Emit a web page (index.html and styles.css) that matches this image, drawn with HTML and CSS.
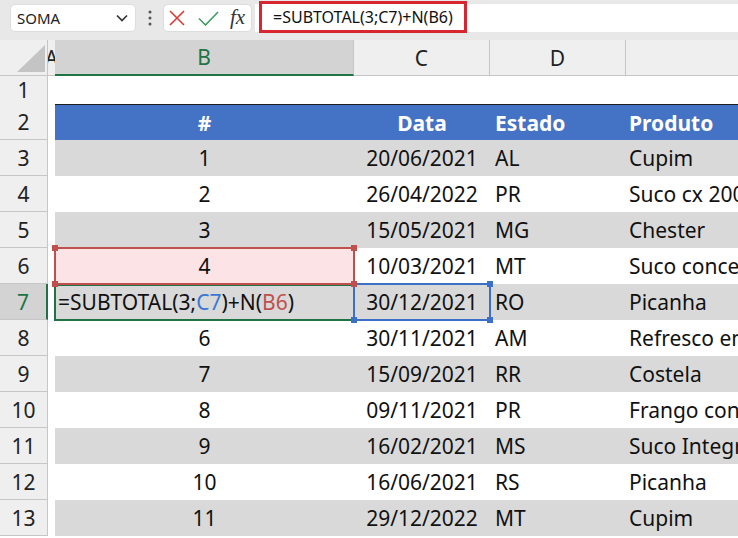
FILE: index.html
```html
<!DOCTYPE html>
<html lang="pt">
<head>
<meta charset="utf-8">
<title>SUBTOTAL</title>
<link rel="stylesheet" href="styles.css">
</head>
<body>
<div class="topbar">
  <div class="namebox">
    <span>SOMA</span>
    <svg class="chev" width="12" height="8" viewBox="0 0 12 8"><polyline points="1,1.5 6,6.5 11,1.5" fill="none" stroke="#333" stroke-width="1.7"/></svg>
  </div>
  <div class="sep">
    <svg width="4" height="16" viewBox="0 0 4 16"><circle cx="2" cy="2" r="1.5" fill="#555"/><circle cx="2" cy="8" r="1.5" fill="#555"/><circle cx="2" cy="14" r="1.5" fill="#555"/></svg>
  </div>
  <div class="fxbox">
    <svg class="ico-x" width="16" height="16" viewBox="0 0 16 16"><path d="M1 1 L15 15 M15 1 L1 15" stroke="#d83a34" stroke-width="1.6" fill="none"/></svg>
    <svg class="ico-ok" width="21" height="15" viewBox="0 0 21 15"><polyline points="1,7.5 7.5,14 20,1" fill="none" stroke="#3f9a62" stroke-width="1.6"/></svg>
    <span class="fx">fx</span>
  </div>
  <div class="formula">
    <span class="formula-text">=SUBTOTAL(3;C7)+N(B6)</span>
  </div>
</div>

<div class="sheet">
  <div class="row colhdr">
    <div class="corner"><svg width="28" height="27" viewBox="0 0 28 27"><polygon points="28,0 28,27 0,27" fill="#c4c4c4"/></svg></div>
    <div class="ch cha">A</div>
    <div class="ch chb">B</div>
    <div class="ch chc">C</div>
    <div class="ch chd">D</div>
    <div class="ch che"></div>
  </div>

  <div class="row short">
    <div class="rh">1</div><div class="c a"></div><div class="c"></div><div class="c"></div><div class="c"></div><div class="c"></div>
  </div>

  <div class="row thead">
    <div class="rh">2</div><div class="c a"></div>
    <div class="c b">#</div><div class="c cc">Data</div><div class="c d">Estado</div><div class="c e">Produto</div>
  </div>

  <div class="row band">
    <div class="rh">3</div><div class="c a"></div>
    <div class="c b">1</div><div class="c cc">20/06/2021</div><div class="c d">AL</div><div class="c e">Cupim</div>
  </div>
  <div class="row">
    <div class="rh">4</div><div class="c a"></div>
    <div class="c b">2</div><div class="c cc">26/04/2022</div><div class="c d">PR</div><div class="c e">Suco cx 200ml</div>
  </div>
  <div class="row band">
    <div class="rh">5</div><div class="c a"></div>
    <div class="c b">3</div><div class="c cc">15/05/2021</div><div class="c d">MG</div><div class="c e">Chester</div>
  </div>
  <div class="row">
    <div class="rh">6</div><div class="c a"></div>
    <div class="c b ref-b6">4<span class="sel sel-red"><i class="h tl"></i><i class="h tr"></i><i class="h bl"></i><i class="h br"></i></span></div>
    <div class="c cc">10/03/2021</div><div class="c d">MT</div><div class="c e">Suco concentrado</div>
  </div>
  <div class="row band">
    <div class="rh rh-active">7</div><div class="c a"></div>
    <div class="c b edit">=SUBTOTAL(3;<span class="ref-blue">C7</span>)+N(<span class="ref-red">B6</span>)<span class="sel sel-green"></span></div>
    <div class="c cc ref-c7">30/12/2021<span class="sel sel-blue"><i class="h tl"></i><i class="h tr"></i><i class="h bl"></i><i class="h br"></i></span></div>
    <div class="c d">RO</div><div class="c e">Picanha</div>
  </div>
  <div class="row">
    <div class="rh">8</div><div class="c a"></div>
    <div class="c b">6</div><div class="c cc">30/11/2021</div><div class="c d">AM</div><div class="c e">Refresco em pó</div>
  </div>
  <div class="row band">
    <div class="rh">9</div><div class="c a"></div>
    <div class="c b">7</div><div class="c cc">15/09/2021</div><div class="c d">RR</div><div class="c e">Costela</div>
  </div>
  <div class="row">
    <div class="rh">10</div><div class="c a"></div>
    <div class="c b">8</div><div class="c cc">09/11/2021</div><div class="c d">PR</div><div class="c e">Frango congelado</div>
  </div>
  <div class="row band">
    <div class="rh">11</div><div class="c a"></div>
    <div class="c b">9</div><div class="c cc">16/02/2021</div><div class="c d">MS</div><div class="c e">Suco Integral</div>
  </div>
  <div class="row">
    <div class="rh">12</div><div class="c a"></div>
    <div class="c b">10</div><div class="c cc">16/06/2021</div><div class="c d">RS</div><div class="c e">Picanha</div>
  </div>
  <div class="row band">
    <div class="rh">13</div><div class="c a"></div>
    <div class="c b">11</div><div class="c cc">29/12/2022</div><div class="c d">MT</div><div class="c e">Cupim</div>
  </div>
</div>
</body>
</html>
```

FILE: styles.css
```css
html, body {
  margin: 0;
  padding: 0;
}
body {
  width: 738px;
  height: 538px;
  overflow: hidden;
  background: #ffffff;
  font-family: "Noto Sans", "Open Sans", sans-serif;
  color: #111;
}

/* ---------- formula bar ---------- */
.topbar {
  height: 40px;
  box-sizing: border-box;
  background: #e8e8e8;
  display: flex;
  align-items: flex-start;
  padding: 4px 0 0 10px;
}
.namebox {
  width: 126px;
  height: 28px;
  box-sizing: border-box;
  background: #fff;
  border: 1px solid #dddddd;
  border-radius: 5px;
  display: flex;
  align-items: center;
  justify-content: space-between;
  padding: 0 7px 0 6px;
  font-size: 15px;
  color: #222;
}
.sep {
  width: 27px;
  height: 28px;
  display: flex;
  align-items: center;
  justify-content: center;
}
.fxbox {
  width: 89px;
  height: 28px;
  box-sizing: border-box;
  background: #fff;
  border: 1px solid #dddddd;
  border-radius: 5px;
  display: flex;
  align-items: center;
  padding-left: 5px;
}
.ico-x { margin-right: 13px; }
.ico-ok { margin-right: 11px; margin-top: 1px; }
.fx {
  font-family: "Liberation Serif", "DejaVu Serif", serif;
  font-style: italic;
  font-size: 21px;
  color: #333;
  line-height: 1;
  margin-top: -2px;
}
.formula {
  flex: 1;
  height: 28px;
  background: #fff;
  margin-left: 3px;
  display: flex;
  align-items: flex-start;
}
.formula-text {
  margin: -3px 0 0 4px;
  height: 32px;
  box-sizing: border-box;
  border: 3px solid #d7262f;
  padding: 0 11px;
  display: flex;
  align-items: center;
  font-size: 16px;
  color: #111;
  white-space: nowrap;
}

/* ---------- sheet ---------- */
.sheet {
  display: flex;
  flex-direction: column;
}
.row {
  display: grid;
  grid-template-columns: 48px 7px 299px 136px 136px 1fr;
  height: 36px;
}
.row.short { height: 28px; }

.colhdr .corner,
.colhdr .ch {
  background: #efefef;
  border-bottom: 1px solid #c6c6c6;
  box-sizing: border-box;
}
.colhdr .corner {
  border-right: 1px solid #c6c6c6;
  display: flex;
  align-items: flex-end;
  justify-content: flex-end;
  padding: 0 2px 3px 0;
}
.colhdr .ch {
  display: flex;
  align-items: center;
  justify-content: center;
  font-size: 21px;
  color: #222;
  overflow: hidden;
}
.colhdr .chb {
  background: #d3d3d3;
  color: #217346;
  border-bottom: 2px solid #217346;
  border-right: 1px solid #c6c6c6;
}
.colhdr .chc,
.colhdr .chd { border-right: 1px solid #c6c6c6; }

.rh {
  background: #efefef;
  border-right: 1px solid #c6c6c6;
  border-bottom: 1px solid #c6c6c6;
  box-sizing: border-box;
  display: flex;
  align-items: center;
  justify-content: center;
  font-size: 21px;
  color: #222;
}
.rh-active {
  background: #d3d3d3;
  color: #217346;
  border-right: 2px solid #217346;
}

.c {
  display: flex;
  align-items: center;
  font-size: 21px;
  color: #111;
  white-space: nowrap;
  position: relative;
  min-width: 0;
}
.c.b, .c.cc { justify-content: center; }
.c.d { padding-left: 5px; }
.c.e { padding-left: 3px; overflow: hidden; }

.band .c:not(.a) { background: #d9d9d9; }

.thead .c:not(.a) {
  background: #4472c4;
  color: #fff;
  font-weight: 700;
  border-top: 1px solid #1e1e1e;
  box-sizing: border-box;
}

/* references / selection */
.ref-b6 { background: #fce4e6; }
.c.edit { justify-content: flex-start; padding-left: 3px; }
.ref-blue { color: #3a78d2; }
.ref-red { color: #c0504d; }
.ref-c7.c { background: #d4d7dd; }

.sel {
  position: absolute;
  left: 0;
  top: 0;
  right: 0;
  bottom: 0;
  box-sizing: border-box;
  pointer-events: none;
}
.sel-red { border: 2px solid #c0504d; z-index: 4; left: -1px; top: -1px; right: -1px; bottom: -1px; }
.sel-green { border: 2px solid #217346; z-index: 3; left: -1px; right: -1px; top: 0; bottom: -1px; }
.sel-blue { border: 2px solid #3c6fc6; z-index: 3; left: -1px; top: -1px; right: -1px; bottom: -1px; }

.h {
  position: absolute;
  width: 6px;
  height: 6px;
}
.sel-red .h { background: #c0504d; }
.sel-blue .h { background: #3c6fc6; }
.h.tl { left: -4px; top: -4px; }
.h.tr { right: -4px; top: -4px; }
.h.bl { left: -4px; bottom: -4px; }
.h.br { right: -4px; bottom: -4px; }
```
